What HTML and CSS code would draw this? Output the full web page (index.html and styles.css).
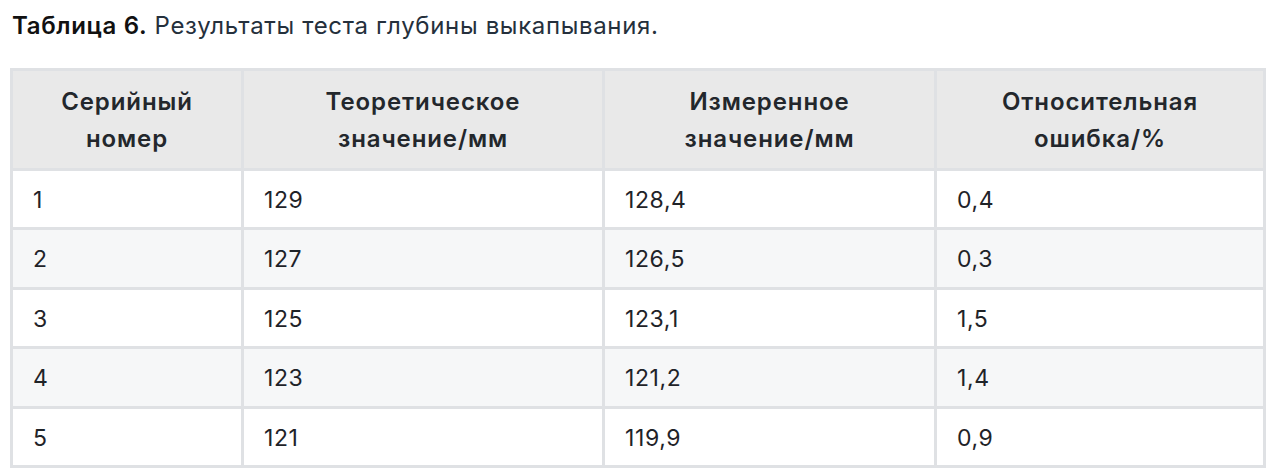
FILE: index.html
```html
<!DOCTYPE html>
<html lang="ru">
<head>
<meta charset="utf-8">
<link rel="stylesheet" href="styles.css">
</head>
<body>
<div class="page">
  <p class="caption"><strong>Таблица 6.</strong> Результаты теста глубины выкапывания.</p>
  <table class="data">
    <colgroup>
      <col class="c1"><col class="c2"><col class="c3"><col class="c4">
    </colgroup>
    <thead>
      <tr>
        <th>Серийный<br>номер</th>
        <th>Теоретическое<br>значение/мм</th>
        <th>Измеренное<br>значение/мм</th>
        <th>Относительная<br>ошибка/%</th>
      </tr>
    </thead>
    <tbody>
      <tr><td>1</td><td>129</td><td>128,4</td><td>0,4</td></tr>
      <tr><td>2</td><td>127</td><td>126,5</td><td>0,3</td></tr>
      <tr><td>3</td><td>125</td><td>123,1</td><td>1,5</td></tr>
      <tr><td>4</td><td>123</td><td>121,2</td><td>1,4</td></tr>
      <tr><td>5</td><td>121</td><td>119,9</td><td>0,9</td></tr>
    </tbody>
  </table>
</div>
</body>
</html>
```

FILE: styles.css
```css
html, body {
  margin: 0;
  padding: 0;
  background: #ffffff;
}

.page {
  padding: 9px 13px 0 10px;
  font-family: Inter, "Noto Sans", "Liberation Sans", sans-serif;
  color: #1f2328;
}

.caption {
  margin: 0 0 26px 2px;
  font-size: 24px;
  line-height: 33px;
  letter-spacing: 0.65px;
  color: #25303c;
}

.caption strong {
  font-weight: 600;
  color: #111111;
}

.data {
  width: 1253px;
  border-collapse: collapse;
  table-layout: fixed;
}

.c1 { width: 231px; }
.c2 { width: 361px; }
.c3 { width: 332px; }
.c4 { width: 329px; }

.data th,
.data td {
  border: 3px solid #dfe1e4;
}

.data th {
  background: #e9e9e9;
  font-size: 24px;
  font-weight: 600;
  letter-spacing: 0.9px;
  text-align: center;
  line-height: 37px;
  padding: 12px 6px 11px;
  color: #23272c;
}

.data td {
  font-size: 23px;
  letter-spacing: 0.6px;
  text-align: left;
  line-height: 37px;
  padding: 11px 20px 8.4px 20px;
  font-weight: 400;
}

.data tbody tr:nth-child(even) td {
  background: #f6f7f8;
}
```
